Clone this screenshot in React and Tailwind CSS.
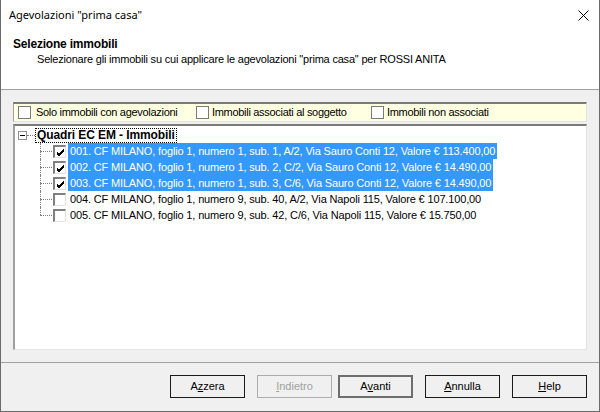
import React from "react";

const items = [
  { id: "001", text: "001. CF MILANO, foglio 1, numero 1, sub. 1, A/2, Via Sauro Conti 12, Valore € 113.400,00", on: true },
  { id: "002", text: "002. CF MILANO, foglio 1, numero 1, sub. 2, C/2, Via Sauro Conti 12, Valore € 14.490,00", on: true },
  { id: "003", text: "003. CF MILANO, foglio 1, numero 1, sub. 3, C/6, Via Sauro Conti 12, Valore € 14.490,00", on: true },
  { id: "004", text: "004. CF MILANO, foglio 1, numero 9, sub. 40, A/2, Via Napoli 115, Valore € 107.100,00", on: false },
  { id: "005", text: "005. CF MILANO, foglio 1, numero 9, sub. 42, C/6, Via Napoli 115, Valore € 15.750,00", on: false },
];

function FlatBox() {
  return <span className="inline-block h-[13px] w-[13px] shrink-0 border border-[#7a7a7a] bg-white" />;
}

function TreeBox({ on }) {
  return (
    <span className="relative inline-block h-[13px] w-[13px] shrink-0 border-t-2 border-l-2 border-r border-b border-t-[#808080] border-l-[#808080] border-r-[#e3e3e3] border-b-[#e3e3e3] bg-white">
      {on && (
        <svg className="absolute left-[1px] top-[1px]" width="9" height="9" viewBox="0 0 9 9">
          <path d="M1 4 L3 6 L8 1 M1 5 L3 7 L8 2 M1 6 L3 8 L8 3" stroke="#000" strokeWidth="1" fill="none" shapeRendering="crispEdges" />
        </svg>
      )}
    </span>
  );
}

function Btn({ pre, u, post, disabled, main }) {
  const base = "flex h-[23px] w-[75px] items-center justify-center bg-[#f0f0f0] text-[11px]";
  const look = disabled
    ? "border border-[#adadad] text-[#a0a0a0]"
    : main
    ? "border-2 border-[#6d6d6d] text-black"
    : "border border-[#1a1a1a] text-black";
  return (
    <div className={`${base} ${look}`}>
      {pre}
      <span className="underline underline-offset-1">{u}</span>
      {post}
    </div>
  );
}

export default function App() {
  return (
    <div
      className="flex h-[412px] w-[600px] flex-col overflow-hidden border-x border-b border-[#6b6b6b] bg-[#f0f0f0] text-[11px] text-black"
      style={{ fontFamily: '"Liberation Sans", Arial, sans-serif' }}
    >
      {/* title + header */}
      <div className="h-[90px] shrink-0 border-b border-[#a0a0a0] bg-white">
        <div className="flex h-[30px] items-center justify-between pl-2 pr-[10px]">
          <span className="text-[11px]" style={{ fontFamily: '"Noto Sans", "Open Sans", sans-serif' }}>
            Agevolazioni "prima casa"
          </span>
          <svg width="11" height="11" viewBox="0 0 11 11">
            <path d="M0.5 0.5 L10.5 10.5 M10.5 0.5 L0.5 10.5" stroke="#000" strokeWidth="1" />
          </svg>
        </div>
        <div className="pl-3 pt-[7px] text-[12px] font-bold leading-[15px] tracking-[-0.2px]">Selezione immobili</div>
        <div className="pl-9 leading-[15px] tracking-[-0.2px]">
          Selezionare gli immobili su cui applicare le agevolazioni "prima casa" per ROSSI ANITA
        </div>
      </div>

      <div className="flex flex-col px-3 pt-3">
        {/* filters */}
        <div className="flex h-[20px] items-center border-t-2 border-l border-b border-r border-t-[#7a7a7a] border-l-[#a0a0a0] border-b-[#e3e3e3] border-r-[#e3e3e3] bg-[#ffffe1] pl-[4px] tracking-[-0.3px]">
          <div className="flex w-[178px] items-center gap-[5px]">
            <FlatBox />
            <span>Solo immobili con agevolazioni</span>
          </div>
          <div className="flex w-[175px] items-center gap-[3px]">
            <FlatBox />
            <span>Immobili associati al soggetto</span>
          </div>
          <div className="flex items-center gap-[3px]">
            <FlatBox />
            <span>Immobili non associati</span>
          </div>
        </div>

        {/* tree */}
        <div className="mt-[2px] h-[226px] border-t-2 border-l-2 border-r border-b border-t-[#7a7a7a] border-l-[#a0a0a0] border-b-[#e3e3e3] border-r-[#e3e3e3] bg-white pt-[1px]">
          <div className="flex h-[16px] items-center">
            <span className="ml-[3px] flex h-[9px] w-[9px] items-center justify-center border border-[#919191] bg-white">
              <span className="h-px w-[5px] bg-black" />
            </span>
            <span className="w-[8px] border-t border-dotted border-[#808080]" />
            <span className="border border-dotted border-black px-[1px] text-[12px] font-bold leading-[13px] tracking-[-0.1px]">
              Quadri EC EM - Immobili
            </span>
          </div>
          <div className="ml-[25px] flex flex-col">
            {items.map((it, i) => (
              <div key={it.id} className="flex h-[16px] items-center">
                <span className="relative h-[16px] w-[13px]">
                  <span
                    className={`absolute left-0 top-0 border-l border-dotted border-[#808080] ${
                      i === items.length - 1 ? "h-[8px]" : "h-[16px]"
                    }`}
                  />
                  <span className="absolute left-0 top-[8px] w-[12px] border-t border-dotted border-[#808080]" />
                </span>
                <TreeBox on={it.on} />
                <span
                  className={`ml-[2px] px-[2px] text-[11px] leading-[16px] tracking-[-0.15px] ${
                    it.on ? "bg-[#3399ff] text-white" : ""
                  }`}
                >
                  {it.text}
                </span>
              </div>
            ))}
          </div>
        </div>
      </div>

      <div className="mt-[12px] border-t border-[#a0a0a0]" />

      <div className="flex justify-end pr-3 pt-[12px]">
        <Btn pre="A" u="z" post="zera" />
        <div className="ml-3">
          <Btn u="I" post="ndietro" disabled />
        </div>
        <div className="ml-[6px]">
          <Btn pre="A" u="v" post="anti" main />
        </div>
        <div className="ml-3">
          <Btn u="A" post="nnulla" />
        </div>
        <div className="ml-3">
          <Btn u="H" post="elp" />
        </div>
      </div>
    </div>
  );
}
